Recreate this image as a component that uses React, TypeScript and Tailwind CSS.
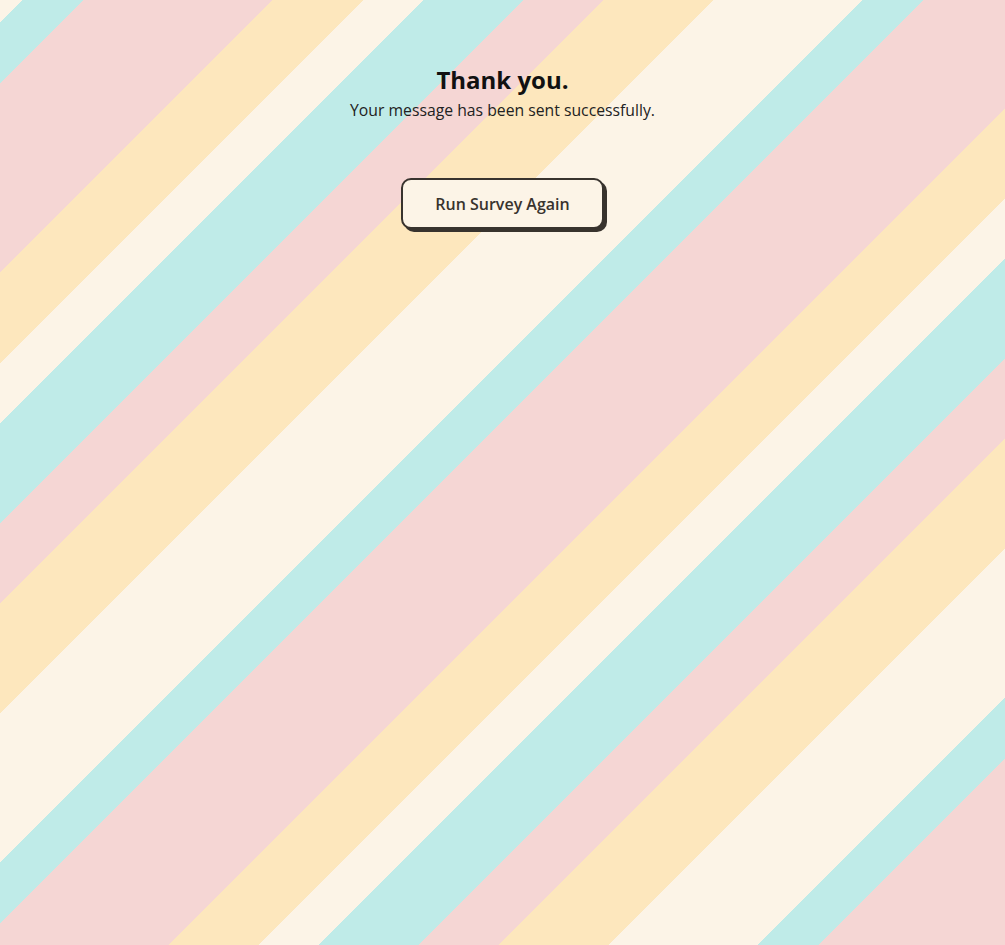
import React from 'react';

// Stripe pattern measured along x + y; px values are those distances divided by √2
const StripeBackground: React.FC<{ children: React.ReactNode }> = ({ children }) => (
  <div className="min-h-screen w-full bg-[image:repeating-linear-gradient(135deg,#fcf4e7_0px,#fcf4e7_15.56px,#bfebe8_15.56px,#bfebe8_58.69px,#f5d6d4_58.69px,#f5d6d4_193.04px,#fde7bd_193.04px,#fde7bd_256.68px,#fcf4e7_256.68px,#fcf4e7_299.11px,#bfebe8_299.11px,#bfebe8_369.82px,#f5d6d4_369.82px,#f5d6d4_426.39px,#fde7bd_426.39px,#fde7bd_504.17px,#fcf4e7_504.17px,#fcf4e7_593.97px)]">
    {children}
  </div>
);

const App: React.FC = () => {
  const handleRestart = () => {
    window.scrollTo(0, 0);
  };

  return (
    <StripeBackground>
      <div className="flex flex-col items-center pt-[64px] font-['Open_Sans',sans-serif]">
        <h1 className="text-[24px] font-bold leading-[32px] text-[#111]">Thank you.</h1>
        <p className="mt-[2px] text-[15.75px] leading-[24px] text-[#222]">
          Your message has been sent successfully.
        </p>
        <button
          onClick={handleRestart}
          className="mt-[56px] rounded-[10px] border-2 border-[#38332e] bg-[#fcf4e7] px-[32px] pt-[12px] pb-[10px] text-[16px] font-semibold leading-[25px] text-[#38332e] shadow-[3px_3px_0_#38332e]"
        >
          Run Survey Again
        </button>
      </div>
    </StripeBackground>
  );
};

export default App;
